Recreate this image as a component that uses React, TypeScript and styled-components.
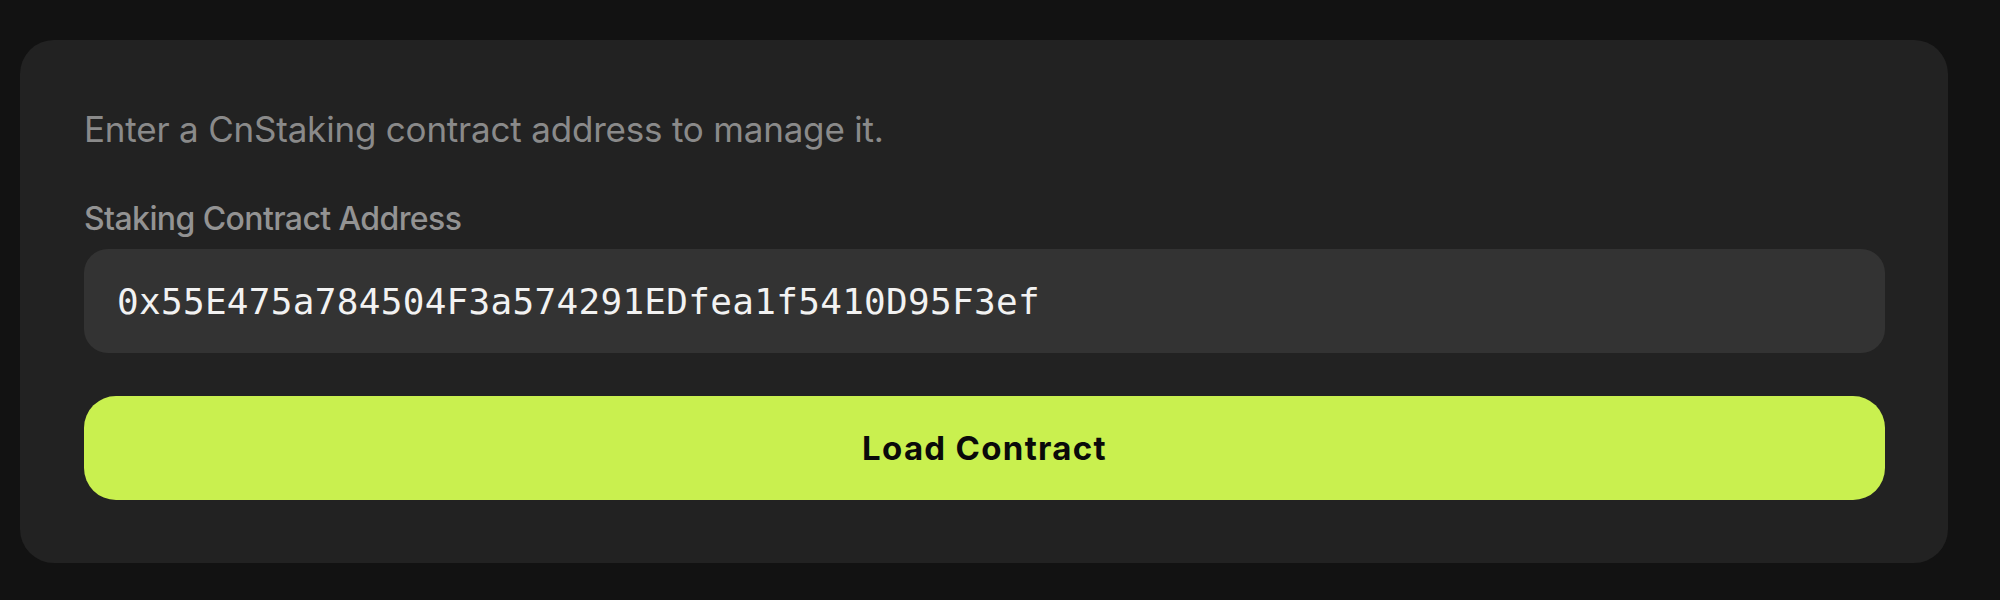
import React from "react";
import styled, { createGlobalStyle } from "styled-components";

const GlobalStyle = createGlobalStyle`
  html, body {
    margin: 0;
    padding: 0;
    background: #121212;
  }
  body {
    font-family: Inter, "Noto Sans", sans-serif;
  }
`;

const Page = styled.div`
  padding: 40px 52px 0 20px;
  box-sizing: border-box;
  width: 2000px;
  height: 600px;
  background: #121212;
`;

const Card = styled.section`
  background: #222222;
  border-radius: 34px;
  padding: 64px 63px 63px 64px;
  display: flex;
  flex-direction: column;
`;

const Description = styled.p`
  margin: 0;
  font-family: Inter, sans-serif;
  font-size: 35px;
  letter-spacing: -0.2px;
  line-height: 50px;
  color: #8a8a8a;
`;

const Field = styled.div`
  display: flex;
  flex-direction: column;
  gap: 10px;
  margin-top: 45px;
`;

const Label = styled.label`
  font-family: Inter, sans-serif;
  font-size: 32px;
  line-height: 40px;
  font-weight: 500;
  color: #939393;
  letter-spacing: -0.6px;
`;

const AddressInput = styled.input`
  box-sizing: border-box;
  height: 104px;
  border: none;
  outline: none;
  border-radius: 24px;
  background: #333333;
  padding: 0 32px 0 33px;
  font-family: "DejaVu Sans Mono", monospace;
  font-size: 36px;
  letter-spacing: 0.3px;
  color: #f2f2f2;
`;

const Button = styled.button`
  margin-top: 43px;
  height: 104px;
  border: none;
  border-radius: 32px;
  background: #c9f04f;
  color: #0a0a0a;
  font-family: Inter, sans-serif;
  font-weight: 700;
  font-size: 33px;
  letter-spacing: 1.3px;
  cursor: pointer;
`;

export default function App() {
  return (
    <>
      <GlobalStyle />
      <Page>
        <Card>
          <Description>Enter a CnStaking contract address to manage it.</Description>
          <Field>
            <Label htmlFor="addr">Staking Contract Address</Label>
            <AddressInput
              id="addr"
              defaultValue="0x55E475a784504F3a574291EDfea1f5410D95F3ef"
              spellCheck={false}
            />
          </Field>
          <Button>Load Contract</Button>
        </Card>
      </Page>
    </>
  );
}
